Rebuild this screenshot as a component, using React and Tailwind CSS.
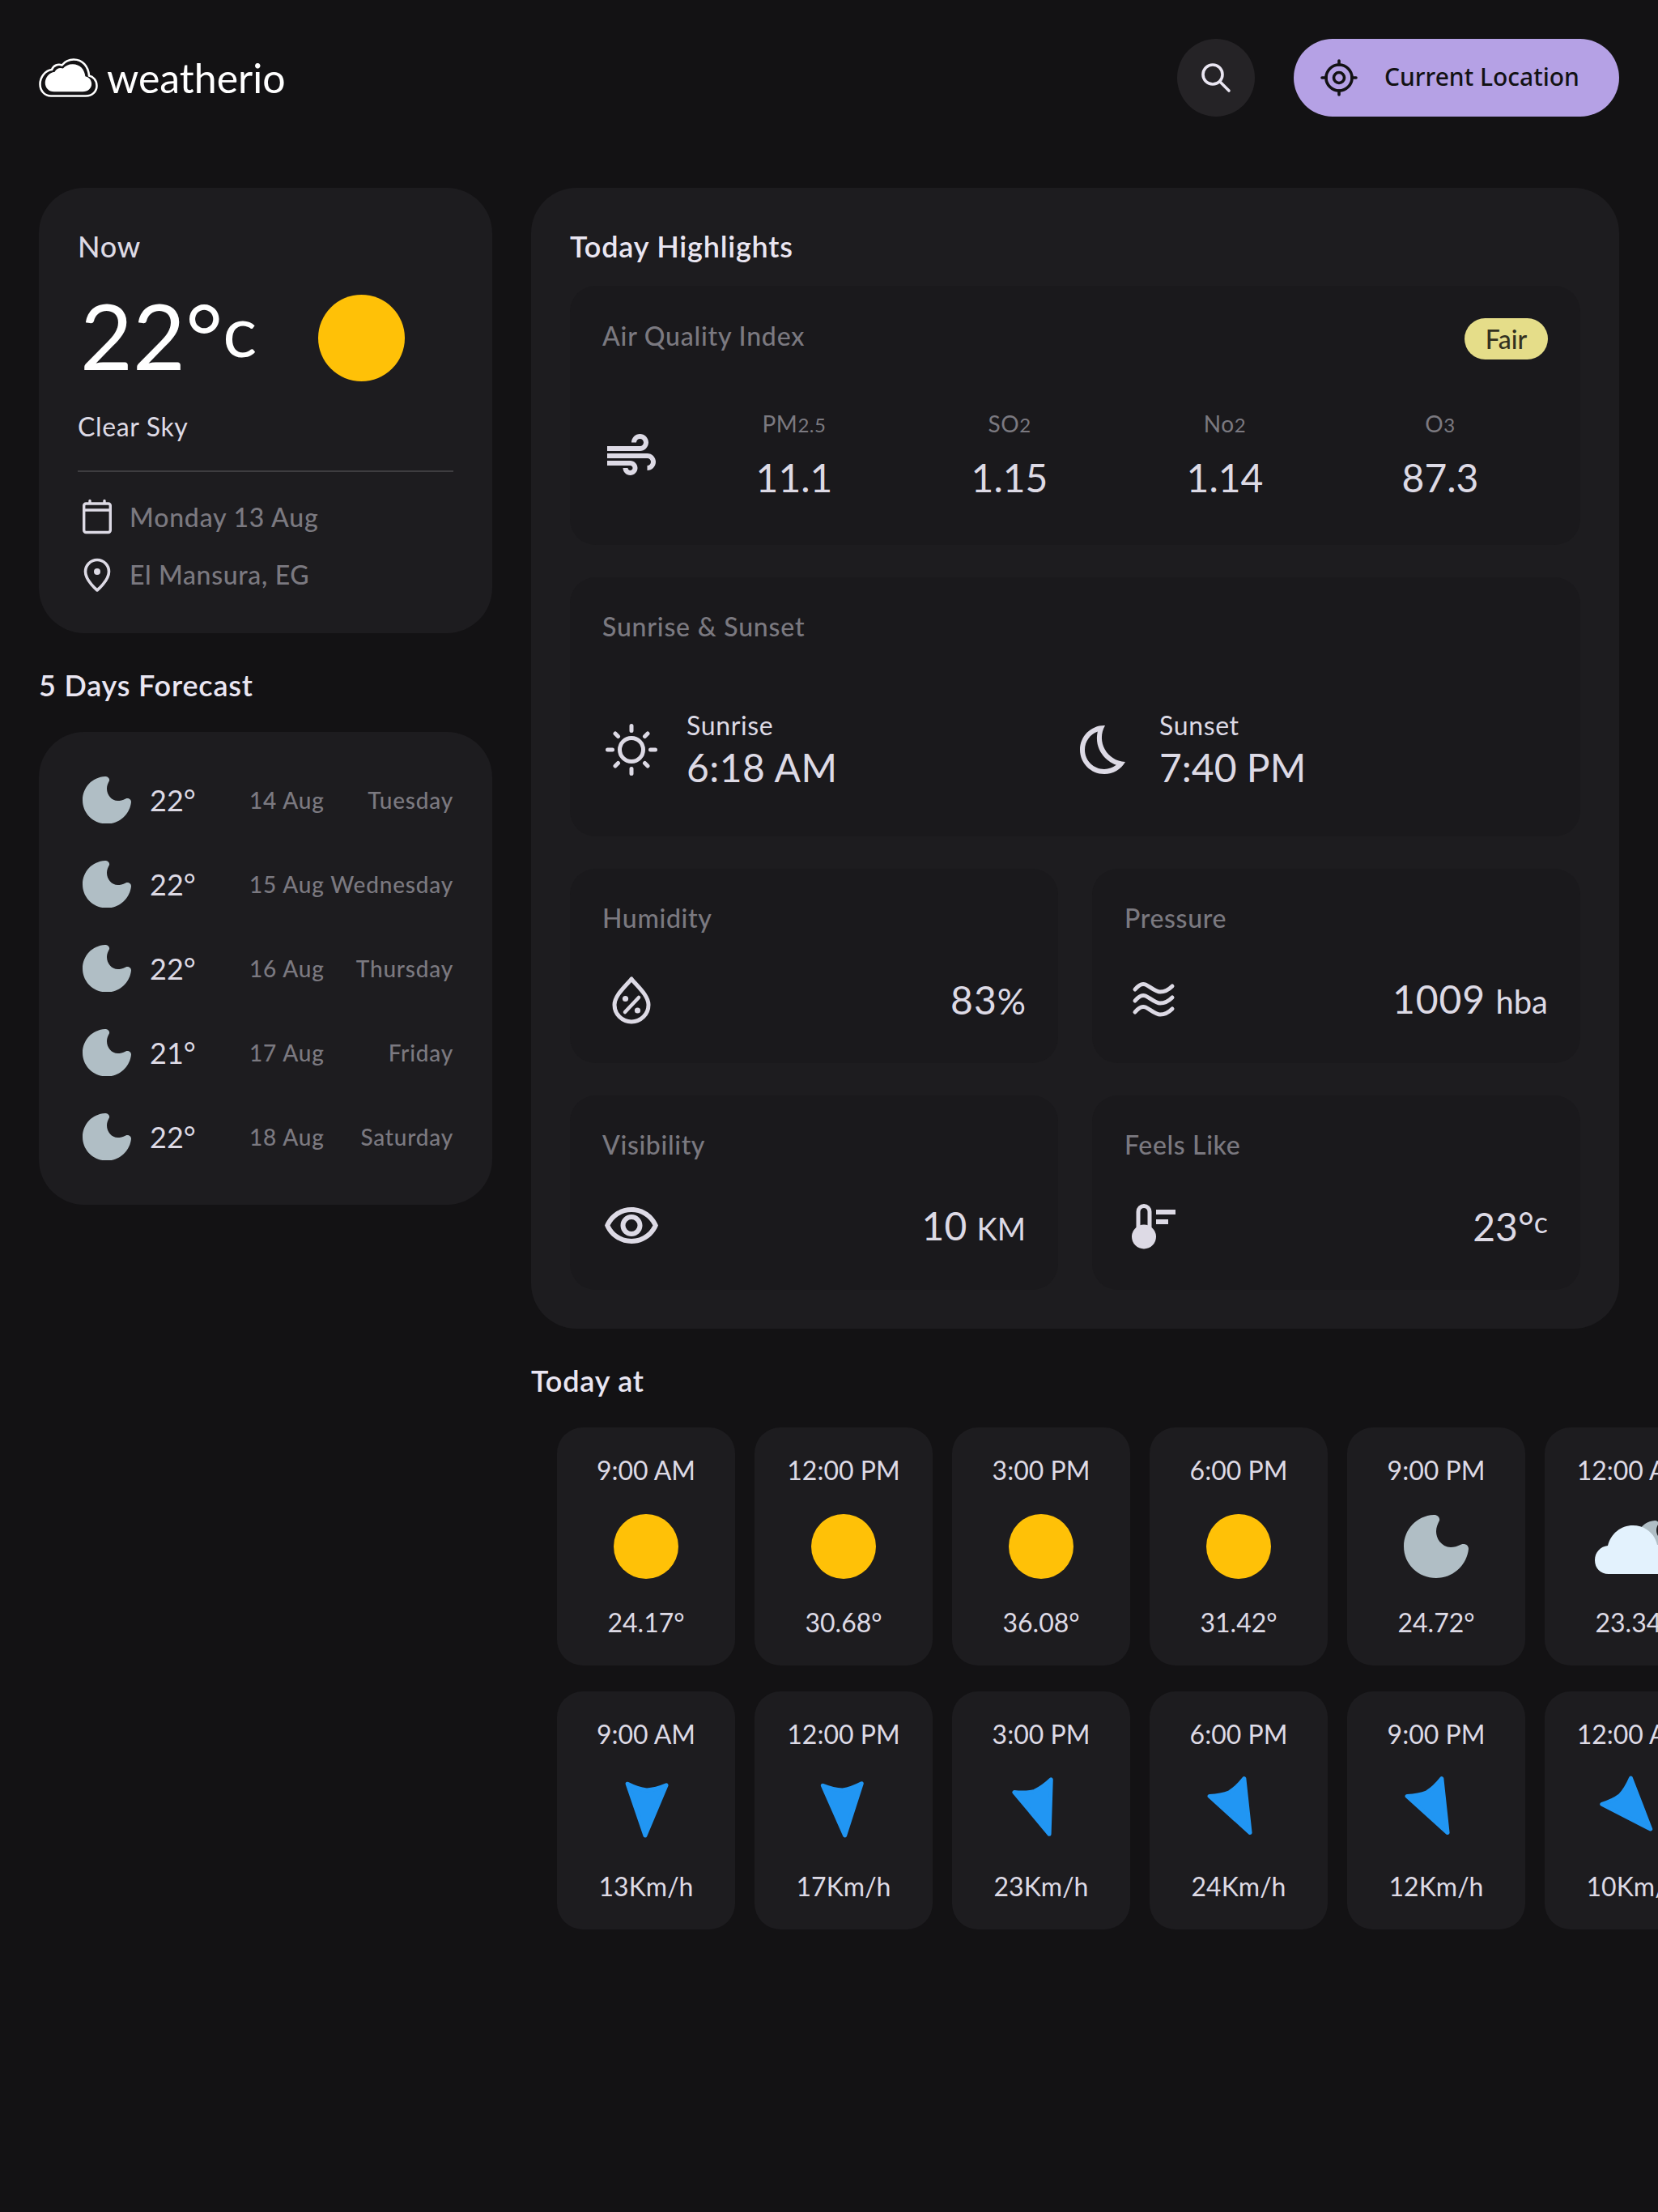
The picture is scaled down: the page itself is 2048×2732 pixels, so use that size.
import { MdAir, MdOutlineBedtime, MdOutlineVisibility } from 'react-icons/md';

const forecast = [
  { temp: '22°', date: '14 Aug', day: 'Tuesday' },
  { temp: '22°', date: '15 Aug', day: 'Wednesday' },
  { temp: '22°', date: '16 Aug', day: 'Thursday' },
  { temp: '21°', date: '17 Aug', day: 'Friday' },
  { temp: '22°', date: '18 Aug', day: 'Saturday' },
];

const air = [
  { name: 'PM', sub: '2.5', value: '11.1' },
  { name: 'SO', sub: '2', value: '1.15' },
  { name: 'No', sub: '2', value: '1.14' },
  { name: 'O', sub: '3', value: '87.3' },
];

const hourly = [
  { time: '9:00 AM', icon: 'sun', temp: '24.17°' },
  { time: '12:00 PM', icon: 'sun', temp: '30.68°' },
  { time: '3:00 PM', icon: 'sun', temp: '36.08°' },
  { time: '6:00 PM', icon: 'sun', temp: '31.42°' },
  { time: '9:00 PM', icon: 'moon', temp: '24.72°' },
  { time: '12:00 AM', icon: 'cloud', temp: '23.34°' },
];

const wind = [
  { time: '9:00 AM', deg: 2, speed: '13Km/h' },
  { time: '12:00 PM', deg: -3, speed: '17Km/h' },
  { time: '3:00 PM', deg: -19, speed: '23Km/h' },
  { time: '6:00 PM', deg: -27, speed: '24Km/h' },
  { time: '9:00 PM', deg: -27, speed: '12Km/h' },
  { time: '12:00 AM', deg: -42, speed: '10Km/h' },
];

const MOON = 'M37 0C41-.5 45 3 44 7C42 11 40 15 40 20C40 31 48 40 58 40C62 40 66 39 71 36.5C75 35 80 37 80 42C78 62 61 78 40 78C18 78 0 61 0 39C0 18 16 1 37 0Z';
const LOGO_CLOUD = 'M15 46.5H58C66 46.5 71.5 41 71.5 34C71.5 27 67 22.5 62 21.5C61 10 54 1.5 43 1.5C37 1.5 32 4 28.5 8.5C24 6.5 18 8.5 16 14C8 15 1.5 23 1.5 32C1.5 40 7 46.5 15 46.5Z';

const Logo = () => (
  <div className="flex items-center gap-[11px]">
    <svg width="73" height="48" viewBox="0 0 73 48" fill="none">
      <path d={LOGO_CLOUD} stroke="#fff" strokeWidth="2.6" />
      <path d={LOGO_CLOUD} fill="#fff" transform="translate(6.5 6) scale(.82 .76)" />
    </svg>
    <span className="text-[50px] leading-[60px] text-white">weatherio</span>
  </div>
);

const Moon = ({ size = 80 }) => (
  <svg width={size} height={size * 0.975} viewBox="0 0 80 78" fill="#b0bec5">
    <path d={MOON} />
  </svg>
);

const Sun = ({ size = 80 }) => (
  <svg width={size} height={size} viewBox="0 0 80 80">
    <circle cx="40" cy="40" r="40" fill="#ffc107" />
  </svg>
);

const CloudMoon = () => (
  <svg width="96" height="80" viewBox="0 0 96 80" className="overflow-visible">
    <path d={MOON} fill="#b0bec5" transform="translate(52 8) scale(.6)" />
    <path d="M17 74C7 74 0 67 0 57C0 47 7 40 16 39C20 24 32 14 47 14C62 14 74 24 77 38C88 39 96 47 96 57C96 67 88 74 78 74Z" fill="#e3f2fd" />
  </svg>
);

const Arrow = ({ deg }) => (
  <svg width="56" height="72" viewBox="0 0 56 72" style={{ transform: `rotate(${deg}deg)` }}>
    <path d="M4 4Q17 10 28 11Q39 10 52 4L28 67Z" fill="#2196f3" stroke="#2196f3" strokeWidth="5" strokeLinejoin="round" />
  </svg>
);

const SearchIcon = () => (
  <svg width="48" height="48" viewBox="0 0 48 48" fill="none" stroke="#eae6f2" strokeWidth="3.6" strokeLinecap="round">
    <circle cx="20" cy="20" r="12" />
    <path d="M29 29L40 40" />
  </svg>
);

const TargetIcon = () => (
  <svg width="48" height="48" viewBox="0 0 48 48" fill="none" stroke="#131214" strokeWidth="3.6" strokeLinecap="round">
    <circle cx="24" cy="24" r="16" />
    <circle cx="24" cy="24" r="6.5" />
    <path d="M24 3V8M24 40V45M3 24H8M40 24H45" />
  </svg>
);

const CalendarIcon = () => (
  <svg width="48" height="48" viewBox="0 0 48 48" fill="none" stroke="#dddae5" strokeWidth="3.4" strokeLinecap="round">
    <rect x="7.7" y="7" width="32.6" height="35.5" rx="2.5" />
    <path d="M8 15H40M15 3.5V6M33 3.5V6" />
  </svg>
);

const PinIcon = () => (
  <svg width="48" height="48" viewBox="0 0 48 48" fill="none" stroke="#dddae5" strokeWidth="3.6" strokeLinejoin="round">
    <path d="M24 43C24 43 9.5 31 9.5 20A14.5 14.5 0 0 1 38.500 20C38.500 31 24 43 24 43Z" />
    <circle cx="24" cy="20" r="4" fill="#dddae5" stroke="none" />
  </svg>
);

const SunriseIcon = () => (
  <svg width="72" height="72" viewBox="0 0 72 72" fill="none" stroke="#dddae5" strokeWidth="5" strokeLinecap="round">
    <circle cx="36" cy="36" r="14.500" />
    <path d="M36 6.500V12.500M36 59.500V65.500M6.500 36H12.500M59.500 36H65.500M16 16L19.500 19.500M52.500 52.500L56 56M16 56L19.500 52.500M52.500 19.500L56 16" />
  </svg>
);

const DropIcon = () => (
  <svg width="72" height="72" viewBox="0 0 72 72" fill="none" stroke="#dddae5" strokeWidth="5" strokeLinecap="round" strokeLinejoin="round">
    <path d="M36 10C30 18 15 30 15 42A21 21 0 0 0 57 42C57 30 42 18 36 10Z" />
    <path d="M28 51L45 33" strokeWidth="4.500" />
    <circle cx="28.500" cy="34.500" r="3.600" fill="#dddae5" stroke="none" />
    <circle cx="43.500" cy="49" r="3.600" fill="#dddae5" stroke="none" />
  </svg>
);

const WaveIcon = () => (
  <svg width="72" height="72" viewBox="0 0 72 72" fill="none" stroke="#dddae5" strokeWidth="5" strokeLinecap="round">
    <path d="M13 23C17 18 21 15 26 17C31 19 38 26 44 26C50 26 55 23 59 19" />
    <path d="M13 37C17 32 21 29 26 31C31 33 38 40 44 40C50 40 55 37 59 33" />
    <path d="M13 51C17 46 21 43 26 45C31 47 38 54 44 54C50 54 55 51 59 47" />
  </svg>
);

const ThermoIcon = () => (
  <svg width="72" height="72" viewBox="0 0 72 72" fill="#dddae5">
    <path d="M17 44V17.500a7 7 0 0 1 14 0V44" fill="none" stroke="#dddae5" strokeWidth="5" />
    <circle cx="24" cy="48.500" r="15" />
    <rect x="39" y="15" width="24" height="6" />
    <rect x="39" y="27" width="15" height="6" />
  </svg>
);

const SmallCard = ({ title, icon, children }) => (
  <div className="h-[240px] rounded-[32px] bg-[#1a191c] px-10 pt-[39px]">
    <div className="text-[32px] leading-[44px] font-medium tracking-[0.02em] text-[#7b7980]">{title}</div>
    <div className="mt-[43px] flex h-[72px] items-center justify-between">
      {icon}
      <div className="text-[48px] leading-[60px] text-[#dddae5]">{children}</div>
    </div>
  </div>
);

const HourCard = ({ time, icon, value }) => (
  <div className="flex h-[294px] w-[220px] shrink-0 flex-col items-center justify-between rounded-[32px] bg-[#1d1c1f] py-[29px] text-[32px] leading-[48px] text-[#dddae5]">
    <div className="whitespace-nowrap">{time}</div>
    <div className="flex h-[80px] items-center justify-center">{icon}</div>
    <div className="whitespace-nowrap">{value}</div>
  </div>
);

const hourIcon = (name) => {
  if (name === 'sun') return <Sun />;
  if (name === 'moon') return <Moon />;
  return <CloudMoon />;
};

export default function App() {
  return (
    <div className="min-h-screen overflow-hidden bg-[#131214] px-12 pt-12 font-['Lato','Noto_Sans',sans-serif]">
      <header className="flex h-[96px] items-center justify-between">
        <Logo />
        <div className="flex items-center gap-12">
          <button className="flex h-[96px] w-[96px] items-center justify-center rounded-full bg-[#252326]">
            <SearchIcon />
          </button>
          <button className="flex h-[96px] w-[402px] items-center gap-8 rounded-full bg-[#b5a1e5] pl-8 font-['Noto_Sans',sans-serif] text-[30px] font-medium text-[#131214]">
            <TargetIcon />
            <span className="pb-[3px]">Current Location</span>
          </button>
        </div>
      </header>

      <main className="mt-[88px] grid grid-cols-[560px_1fr] gap-12">
        {/* left column */}
        <div>
          <section className="h-[550px] rounded-[56px] bg-[#1d1c1f] px-12 pt-12">
            <div className="text-[36px] leading-[48px] font-medium tracking-[0.02em] text-[#dddae5]">Now</div>
            <div className="mt-9 flex h-[106px] items-center">
              <div className="whitespace-nowrap pb-2 pl-[3px] text-[112px] leading-[98px] text-white">
                22°<span className="align-[16px] text-[88px] leading-none">c</span>
              </div>
              <div className="mr-[60px] ml-auto">
                <Sun size={107} />
              </div>
            </div>
            <div className="mt-[35px] text-[32px] leading-[44px] tracking-[0.02em] text-[#dddae5]">Clear Sky</div>
            <div className="mt-8 h-0.5 bg-[#3e3d40]" />
            <div className="mt-8 flex h-12 items-center gap-4 text-[32px] font-medium tracking-[0.025em] text-[#7b7980]">
              <CalendarIcon />
              Monday 13 Aug
            </div>
            <div className="mt-[23px] flex h-12 items-center gap-4 text-[32px] font-medium tracking-[0.02em] text-[#7b7980]">
              <PinIcon />
              El Mansura, EG
            </div>
          </section>

          <h2 className="mt-[39px] mb-[33px] text-[36px] leading-[50px] font-semibold tracking-[0.022em] text-[#eae6f2]">5 Days Forecast</h2>
          <section className="flex flex-col gap-8 rounded-[56px] bg-[#1d1c1f] px-12 py-12">
            {forecast.map((item) => (
              <div key={item.date} className="grid h-[72px] grid-cols-[212px_92px_1fr] items-center whitespace-nowrap">
                <div className="flex items-center gap-[23px] pl-1.5">
                  <Moon size={60} />
                  <span className="text-[36px] text-[#dddae5]">{item.temp}</span>
                </div>
                <span className="text-[28px] font-medium tracking-[0.03em] text-[#7b7980]">{item.date}</span>
                <span className="text-right text-[28px] font-medium tracking-[0.028em] text-[#7b7980]">{item.day}</span>
              </div>
            ))}
          </section>
        </div>

        {/* right column */}
        <div className="min-w-0">
          <section className="rounded-[56px] bg-[#1d1c1f] px-12 pt-[47px] pb-12">
            <h2 className="mb-6 text-[36px] leading-[50px] font-semibold tracking-[0.022em] text-[#eae6f2]">Today Highlights</h2>
            <div className="flex flex-col gap-10">
              <div className="h-[320px] rounded-[32px] bg-[#1a191c] px-10 pt-10">
                <div className="flex items-start justify-between">
                  <div className="text-[32px] leading-[44px] font-medium tracking-[0.025em] text-[#7b7980]">Air Quality Index</div>
                  <span className="flex h-[51px] w-[103px] items-center justify-center rounded-full bg-[#e5dd89] text-[32px] font-medium text-[#33311f]">Fair</span>
                </div>
                <div className="mt-[61px] flex items-center gap-8">
                  <MdAir size={72} color="#dddae5" />
                  <div className="grid flex-1 grid-cols-4 text-center">
                    {air.map((a) => (
                      <div key={a.name}>
                        <div className="text-[28px] leading-[36px] tracking-[0.02em] text-[#7b7980]">
                          {a.name}<span className="text-[24px]">{a.sub}</span>
                        </div>
                        <div className="mt-[17px] text-[48px] leading-[60px] text-[#dddae5]">{a.value}</div>
                      </div>
                    ))}
                  </div>
                </div>
              </div>

              <div className="h-[320px] rounded-[32px] bg-[#1a191c] px-10 pt-[39px]">
                <div className="text-[32px] leading-[44px] font-medium tracking-[0.025em] text-[#7b7980]">Sunrise &amp; Sunset</div>
                <div className="mt-[78px] grid grid-cols-2">
                  <div className="flex items-center gap-8">
                    <SunriseIcon />
                    <div>
                      <div className="text-[32px] leading-[44px] tracking-[0.02em] text-[#dddae5]">Sunrise</div>
                      <div className="text-[48px] leading-[60px] tracking-[0.01em] text-[#dddae5]">6:18 AM</div>
                    </div>
                  </div>
                  <div className="flex items-center gap-8">
                    <MdOutlineBedtime size={72} color="#dddae5" />
                    <div>
                      <div className="text-[32px] leading-[44px] tracking-[0.02em] text-[#dddae5]">Sunset</div>
                      <div className="text-[48px] leading-[60px] text-[#dddae5]">7:40 PM</div>
                    </div>
                  </div>
                </div>
              </div>

              <div className="grid grid-cols-2 gap-x-[42px] gap-y-10">
                <SmallCard title="Humidity" icon={<DropIcon />}>
                  <span className="tracking-[0.02em]">83</span><span className="text-[44px]">%</span>
                </SmallCard>
                <SmallCard title="Pressure" icon={<WaveIcon />}>
                  <span className="tracking-[0.02em]">1009</span> <span className="text-[40px]">hba</span>
                </SmallCard>
                <SmallCard title="Visibility" icon={<MdOutlineVisibility size={72} color="#dddae5" />}>
                  10 <span className="text-[38px]">KM</span>
                </SmallCard>
                <SmallCard title="Feels Like" icon={<ThermoIcon />}>
                  23°<span className="align-[10px] text-[36px] leading-none">c</span>
                </SmallCard>
              </div>
            </div>
          </section>

          <h2 className="mt-[39px] mb-[33px] text-[36px] leading-[50px] font-semibold tracking-[0.022em] text-[#eae6f2]">Today at</h2>
          <div className="-mr-12 flex flex-col gap-8 overflow-hidden pl-8">
            <div className="flex gap-6">
              {hourly.map((h) => (
                <HourCard key={h.time} time={h.time} icon={hourIcon(h.icon)} value={h.temp} />
              ))}
            </div>
            <div className="flex gap-6">
              {wind.map((w) => (
                <HourCard key={w.time} time={w.time} icon={<Arrow deg={w.deg} />} value={w.speed} />
              ))}
            </div>
          </div>
        </div>
      </main>
    </div>
  );
}
